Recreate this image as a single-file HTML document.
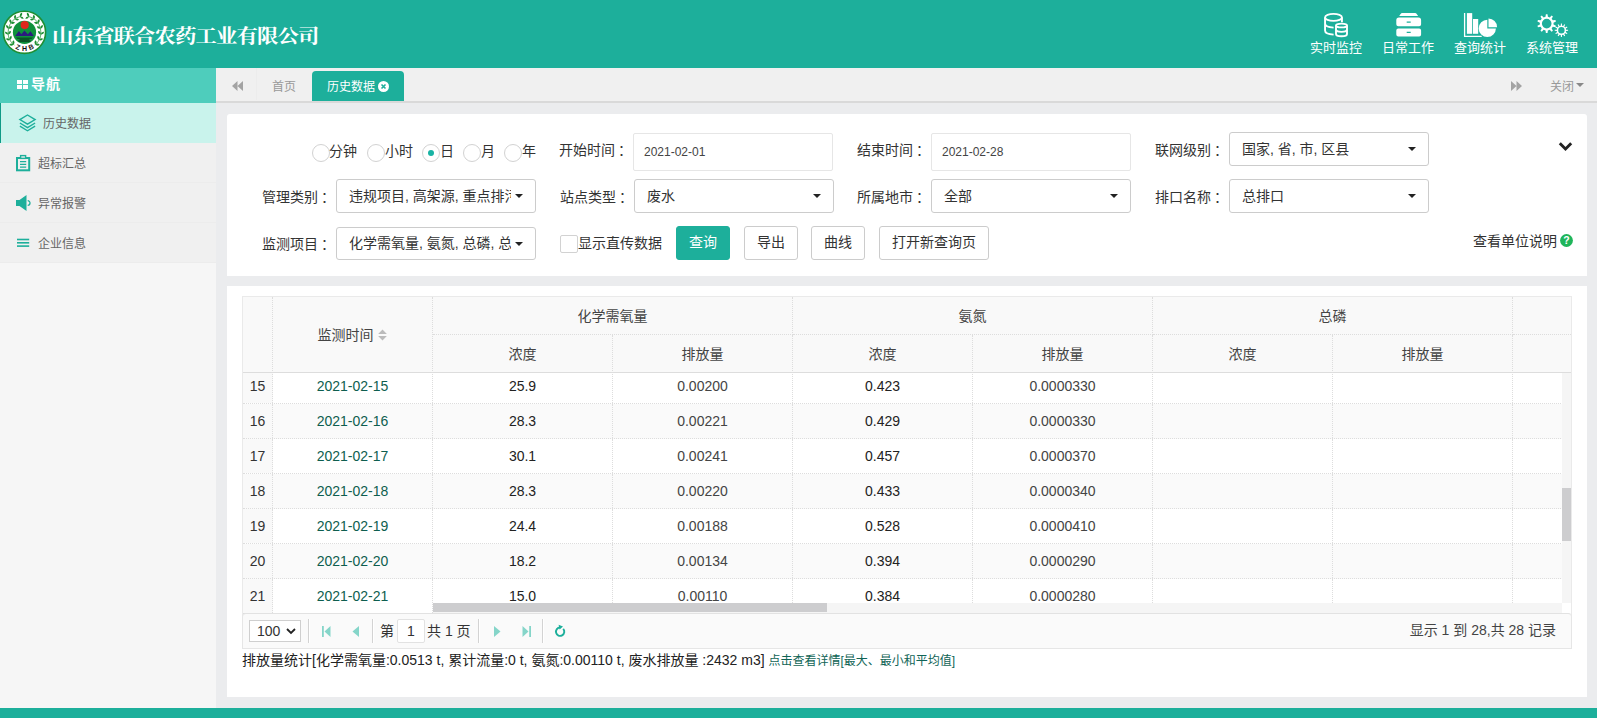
<!DOCTYPE html>
<html lang="zh-CN">
<head>
<meta charset="utf-8">
<title>山东省联合农药工业有限公司</title>
<style>
*{box-sizing:border-box;margin:0;padding:0}
html,body{width:1597px;height:718px;overflow:hidden;background:#ebecee}
body{position:relative;font-family:"Liberation Sans","Noto Sans CJK SC",sans-serif;font-size:13px;color:#333}
.abs{position:absolute}
/* header */
#hdr{position:absolute;left:0;top:0;width:1597px;height:68px;background:#1daf9b}
#title{position:absolute;left:52px;top:18px;height:36px;line-height:36px;font-family:"Liberation Serif","Noto Serif CJK SC",serif;font-weight:700;font-size:20px;color:#fff;letter-spacing:-0.85px;transform:scale(1.07,0.94);transform-origin:0 50%;white-space:nowrap}
.tm{position:absolute;top:0;width:72px;height:68px;color:#fff;text-align:center}
.tm svg{position:absolute;left:0;top:0}
.tm span{position:absolute;left:0;width:72px;top:39px;line-height:18px;font-size:13px;white-space:nowrap}
/* sidebar */
#side{position:absolute;left:0;top:68px;width:216px;height:640px;background:#f6f6f6}
#navh{position:absolute;left:0;top:0;width:216px;height:35px;background:#4ecdbc;color:#fff;font-weight:700;font-size:14px;line-height:34px}
#navh span{position:absolute;left:31px;top:-1px;letter-spacing:1px}
.mi{position:absolute;left:0;width:216px;height:40px;background:#f0f0f0;border-bottom:1px solid #ececec;color:#666;font-size:12px;line-height:40px}
.mi span{position:absolute;left:38px;top:1px;white-space:nowrap}
.mi.act{background:#c9f3ec;border-left:1px solid #0f9a86;border-bottom:none}
.mi.act span{left:42px}
/* tabs */
#tabs{position:absolute;left:216px;top:68px;width:1381px;height:35px;background:#f0f0f0;border-bottom:2px solid #d9d9d9}
#tabs .t{position:absolute;top:1px;height:32px;line-height:36px;font-size:12px;color:#999;white-space:nowrap}
#tabact{position:absolute;left:96px;top:3px;width:92px;height:30px;background:#1daf9b;border-radius:4px 4px 0 0;color:#fff;font-size:12px;line-height:30px}
/* cards */
.card{position:absolute;background:#fff;border-radius:0}
#fc{border-radius:3px 3px 0 0}
.lbl{position:absolute;font-size:14px;color:#333;line-height:20px;white-space:nowrap}
.sel{position:absolute;height:33px;width:200px;border:1px solid #ccc;border-radius:3px;background:#fff;font-size:14px;line-height:31px;color:#333;padding-left:12px;white-space:nowrap;overflow:hidden}
.sel i{position:absolute;right:12px;top:14px;width:0;height:0;border-left:4px solid transparent;border-right:4px solid transparent;border-top:4px solid #222}
.sel b{font-weight:400;display:block;width:162px;overflow:hidden}
.inp{position:absolute;height:38px;width:200px;border:1px solid #e6e6e6;border-radius:2px;background:#fff;font-size:12px;line-height:36px;color:#444;padding-left:10px}
.rad{position:absolute;width:18px;height:18px;border-radius:50%;border:1px solid #d2d2d2;background:#fff}
.btn{position:absolute;top:112px;height:34px;border:1px solid #ccc;border-radius:3px;background:#fff;font-size:14px;line-height:31px;text-align:center;color:#333;white-space:nowrap}
/* table */
#grid{position:absolute;left:15px;top:10px;width:1330px;height:353px;border:1px solid #eaeaea;overflow:hidden;background:#fff}
.hc{position:absolute;background:#f9f9f9;font-size:14px;color:#444;text-align:center;white-space:nowrap;border-right:1px dotted #ddd;border-bottom:1px dotted #ddd}
.row{position:absolute;left:0;width:1320px;height:35px;border-bottom:1px dotted #ddd;font-size:14px;line-height:34px}
.row.odd{background:#fafafa}
.row div{position:absolute;top:0;height:34px;text-align:center;border-right:1px dotted #ddd;color:#222}
.row .n{left:0;width:30px;background:#f9f9f9;color:#333}
.row .d{left:30px;width:160px;color:#0e5e4f}
.row .c1{left:190px;width:180px}
.row .c2{left:370px;width:180px;color:#444}
.row .c3{left:550px;width:180px}
.row .c4{left:730px;width:180px;color:#444}
.row .c5{left:910px;width:180px}
.row .c6{left:1090px;width:180px}
.row .c7{left:1270px;width:60px;border-right:none}
#pager{position:absolute;left:15px;top:327px;width:1330px;height:36px;background:#fafafa;border:1px solid #e6e6e6;border-top:1px solid #e2e2e2;border-radius:4px 4px 0 0;font-size:14px;color:#333}
.psep{position:absolute;top:5px;width:1px;height:24px;background:#d3d3d3;border-right:1px solid #fff;box-sizing:content-box}
#foot{position:absolute;left:0;top:708px;width:1597px;height:10px;background:#1daf9b}
</style>
</head>
<body>
<!-- HEADER -->
<div id="hdr">
  <svg class="abs" style="left:0;top:0" width="60" height="68" viewBox="0 0 60 68" id="logo">
<circle cx="24.5" cy="32.3" r="21.1" fill="#fff" stroke="#1f8f33" stroke-width="1.6"/>
<circle cx="24.5" cy="32.3" r="11.6" fill="#0f913c"/>
<circle cx="24.7" cy="25.1" r="4.1" fill="#e0261c"/>
<path d="M15.2 36 L18.9 31 L21.3 34.2 L24.5 30.4 L27.8 34.3 L30.5 31.2 L33.8 36 Z" fill="#2b1b7e"/>
<path d="M16 37.4 H33 L31.5 39 H29.5 V40.6 H31 L30 42 H19 L18 40.6 H19.5 V39 H17.5 Z" fill="#0a5526"/>
<path d="M13.53 44.49 Q11.24 42.54 9.24 44.78 Q11.52 46.73 13.53 44.49Z M13.53 44.49 Q15.54 42.26 13.36 40.19 Q11.35 42.42 13.53 44.49Z M9.98 39.91 Q8.51 37.29 5.85 38.69 Q7.32 41.32 9.98 39.91Z M9.98 39.91 Q12.64 38.53 11.32 35.83 Q8.65 37.22 9.98 39.91Z M8.23 34.39 Q7.77 31.42 4.79 31.82 Q5.25 34.79 8.23 34.39Z M8.23 34.39 Q11.22 34.02 10.91 31.03 Q7.93 31.40 8.23 34.39Z M8.52 28.61 Q9.12 25.67 6.19 25.00 Q5.59 27.94 8.52 28.61Z M8.52 28.61 Q11.45 29.30 12.20 26.39 Q9.27 25.70 8.52 28.61Z M10.80 23.29 Q12.38 20.73 9.87 19.09 Q8.28 21.64 10.80 23.29Z M10.80 23.29 Q13.30 24.95 15.02 22.48 Q12.52 20.82 10.80 23.29Z M14.78 19.09 Q17.16 17.24 15.37 14.83 Q13.00 16.67 14.78 19.09Z M14.78 19.09 Q16.56 21.51 19.02 19.80 Q17.25 17.37 14.78 19.09Z M19.98 16.54 Q22.85 15.63 22.01 12.74 Q19.14 13.65 19.98 16.54Z M19.98 16.54 Q20.80 19.43 23.71 18.67 Q22.89 15.78 19.98 16.54Z M35.47 44.49 Q37.65 42.42 35.64 40.19 Q33.46 42.26 35.47 44.49Z M35.47 44.49 Q37.48 46.73 39.76 44.78 Q37.76 42.54 35.47 44.49Z M39.02 39.91 Q40.35 37.22 37.68 35.83 Q36.36 38.53 39.02 39.91Z M39.02 39.91 Q41.68 41.32 43.15 38.69 Q40.49 37.29 39.02 39.91Z M40.77 34.39 Q41.07 31.40 38.09 31.03 Q37.78 34.02 40.77 34.39Z M40.77 34.39 Q43.75 34.79 44.21 31.82 Q41.23 31.42 40.77 34.39Z M40.48 28.61 Q39.73 25.70 36.80 26.39 Q37.55 29.30 40.48 28.61Z M40.48 28.61 Q43.41 27.94 42.81 25.00 Q39.88 25.67 40.48 28.61Z M38.20 23.29 Q36.48 20.82 33.98 22.48 Q35.70 24.95 38.20 23.29Z M38.20 23.29 Q40.72 21.64 39.13 19.09 Q36.62 20.73 38.20 23.29Z M34.22 19.09 Q31.75 17.37 29.98 19.80 Q32.44 21.51 34.22 19.09Z M34.22 19.09 Q36.00 16.67 33.63 14.83 Q31.84 17.24 34.22 19.09Z M29.02 16.54 Q26.11 15.78 25.29 18.67 Q28.20 19.43 29.02 16.54Z M29.02 16.54 Q29.86 13.65 26.99 12.74 Q26.15 15.63 29.02 16.54Z" fill="#1f8f33"/>
<path d="M14.40 45.22 A16.4 16.4 0 0 1 20.81 16.32" fill="none" stroke="#1f8f33" stroke-width="0.7"/>
<path d="M34.60 45.22 A16.4 16.4 0 0 0 28.19 16.32" fill="none" stroke="#1f8f33" stroke-width="0.7"/>
<text x="0" y="0" transform="translate(16.93 49.29) rotate(24)" text-anchor="middle" font-family="Liberation Sans,sans-serif" font-weight="700" font-size="7" fill="#111">Z</text>
<text x="0" y="0" transform="translate(24.50 50.90) rotate(0)" text-anchor="middle" font-family="Liberation Sans,sans-serif" font-weight="700" font-size="7" fill="#111">H</text>
<text x="0" y="0" transform="translate(32.07 49.29) rotate(-24)" text-anchor="middle" font-family="Liberation Sans,sans-serif" font-weight="700" font-size="7" fill="#111">B</text>
</svg>
  <div id="title">山东省联合农药工业有限公司</div>

  <div class="tm" style="left:1300px">
    <svg width="72" height="40" viewBox="0 0 72 40" fill="none" stroke="#fff" stroke-width="1.9">
      <ellipse cx="33.5" cy="17.4" rx="8.45" ry="3.5"/>
      <path d="M25.05 17.4 V30.6 C25.05 32.8 28.6 34.4 33.6 34.6 M41.95 17.4 V22.2 M25.05 23.6 C25.05 25.8 28.6 27.4 33.6 27.6"/>
      <ellipse cx="41.5" cy="25.5" rx="5.5" ry="1.9"/>
      <path d="M36 25.5 V34 C36 35.3 38.4 36.3 41.5 36.3 C44.6 36.3 47 35.3 47 34 V25.5 M36 29.6 C36 30.9 38.4 31.9 41.5 31.9 C44.6 31.9 47 30.9 47 29.6"/>
    </svg>
    <span>实时监控</span>
  </div>
  <div class="tm" style="left:1372px">
    <svg width="72" height="40" viewBox="0 0 72 40" fill="#fff">
      <path d="M30.3 13 H43 Q44.2 13 44.9 14.2 L46.1 16.1 H27.2 L28.4 14.2 Q29.1 13 30.3 13 Z"/>
      <path d="M27 17.6 H46.4 a2.7 2.7 0 0 1 2.7 2.7 V24.3 a2 2 0 0 1 -2 2 H26.3 A2 2 0 0 1 24.3 24.3 V20.3 a2.7 2.7 0 0 1 2.7 -2.7 Z M34.7 21.5 h4 v1.2 h-4 Z" fill-rule="evenodd"/>
      <path d="M26.3 28.4 H47.1 A2 2 0 0 1 49.1 30.4 V34.5 a2 2 0 0 1 -2 2 H26.3 A2 2 0 0 1 24.3 34.5 V30.4 A2 2 0 0 1 26.3 28.4 Z M34.7 31.7 h4 v1.2 h-4 Z" fill-rule="evenodd"/>
    </svg>
    <span>日常工作</span>
  </div>
  <div class="tm" style="left:1444px">
    <svg width="72" height="40" viewBox="0 0 72 40" fill="#fff">
      <path d="M20.6 12.9 V36.35 H37.7" fill="none" stroke="#fff" stroke-width="1.3"/>
      <rect x="22.9" y="13.1" width="5.3" height="20.7"/>
      <rect x="29" y="19" width="5.2" height="14.8"/>
      <path d="M43.3 19.8 A8.6 8.6 0 1 0 51.9 28.4 H43.3 Z"/>
      <path d="M44.5 18.6 A8.6 8.6 0 0 1 53.1 27.2 H44.5 Z"/>
    </svg>
    <span>查询统计</span>
  </div>
  <div class="tm" style="left:1516px">
    <svg width="72" height="40" viewBox="0 0 72 40" fill="#fff" fill-rule="evenodd" id="gears"><path d="M29.51 16.80 L29.87 14.14 L31.53 14.14 L31.89 16.80 L33.74 17.40 L35.59 15.45 L36.94 16.43 L35.66 18.80 L36.80 20.37 L39.44 19.88 L39.96 21.47 L37.53 22.63 L37.53 24.57 L39.96 25.73 L39.44 27.32 L36.80 26.83 L35.66 28.40 L36.94 30.77 L35.59 31.75 L33.74 29.80 L31.89 30.40 L31.53 33.06 L29.87 33.06 L29.51 30.40 L27.66 29.80 L25.81 31.75 L24.46 30.77 L25.74 28.40 L24.60 26.83 L21.96 27.32 L21.44 25.73 L23.87 24.57 L23.87 22.63 L21.44 21.47 L21.96 19.88 L24.60 20.37 L25.74 18.80 L24.46 16.43 L25.81 15.45 L27.66 17.40Z M25.90 23.60 a4.8 4.8 0 1 0 9.6 0 a4.8 4.8 0 1 0 -9.6 0Z"/><path d="M44.73 25.65 L44.91 23.62 L45.89 23.62 L46.07 25.65 L47.14 25.93 L48.32 24.27 L49.17 24.76 L48.31 26.61 L49.09 27.39 L50.94 26.53 L51.43 27.38 L49.77 28.56 L50.05 29.63 L52.08 29.81 L52.08 30.79 L50.05 30.97 L49.77 32.04 L51.43 33.22 L50.94 34.07 L49.09 33.21 L48.31 33.99 L49.17 35.84 L48.32 36.33 L47.14 34.67 L46.07 34.95 L45.89 36.98 L44.91 36.98 L44.73 34.95 L43.66 34.67 L42.48 36.33 L41.63 35.84 L42.49 33.99 L41.71 33.21 L39.86 34.07 L39.37 33.22 L41.03 32.04 L40.75 30.97 L38.72 30.79 L38.72 29.81 L40.75 29.63 L41.03 28.56 L39.37 27.38 L39.86 26.53 L41.71 27.39 L42.49 26.61 L41.63 24.76 L42.48 24.27 L43.66 25.93Z M42.20 30.30 a3.2 3.2 0 1 0 6.4 0 a3.2 3.2 0 1 0 -6.4 0Z"/></svg>
    <span>系统管理</span>
  </div>
</div>

<!-- SIDEBAR -->
<div id="side">
  <div id="navh">
    <svg class="abs" style="left:17px;top:12px" width="12" height="10" viewBox="0 0 12 10" fill="#fff"><rect x="0" y="0" width="5" height="4"/><rect x="6" y="0" width="5" height="4"/><rect x="0" y="5" width="5" height="4"/><rect x="6" y="5" width="5" height="4"/></svg>
    <span>导航</span>
  </div>
  <div class="mi act" style="top:35px">
    <svg class="abs" style="left:17px;top:10px" width="20" height="20" viewBox="0 0 20 20" fill="none" stroke="#1daf9b" stroke-width="1.4" stroke-linejoin="miter"><path d="M9.5 2 L17.1 6.6 L9.5 11.2 L1.9 6.6 Z"/><path d="M1.9 10 L9.5 14.6 L17.1 10"/><path d="M1.9 13.2 L9.5 17.8 L17.1 13.2"/></svg>
    <span>历史数据</span>
  </div>
  <div class="mi" style="top:75px">
    <svg class="abs" style="left:15px;top:11px" width="17" height="19" viewBox="0 0 17 19"><rect x="2" y="4" width="12.2" height="12.3" fill="none" stroke="#1daf9b" stroke-width="2"/><rect x="5.6" y="1.6" width="5" height="2.8" fill="#f0f0f0" stroke="#1daf9b" stroke-width="1.4"/><path d="M5 7.6 H11.2 M5 10.4 H11.2 M5 13.2 H11.2" stroke="#1daf9b" stroke-width="1.3"/></svg>
    <span>超标汇总</span>
  </div>
  <div class="mi" style="top:115px">
    <svg class="abs" style="left:15px;top:11px" width="16" height="18" viewBox="0 0 16 18" fill="#1daf9b"><path d="M1 6 H4.5 L11.5 1 V17 L4.5 12 H1 Z"/><path d="M12.7 6.7 A2.3 2.3 0 0 1 12.7 11.3" fill="none" stroke="#1daf9b" stroke-width="1.3"/></svg>
    <span>异常报警</span>
  </div>
  <div class="mi" style="top:155px">
    <svg class="abs" style="left:17px;top:15px" width="13" height="10" viewBox="0 0 13 10" fill="#1daf9b"><rect x="0" y="0.7" width="12.2" height="1.6"/><rect x="0" y="4" width="12.2" height="1.6"/><rect x="0" y="7.3" width="12.2" height="1.6"/></svg>
    <span>企业信息</span>
  </div>
</div>

<!-- TABS -->
<div id="tabs">
  <svg class="abs" style="left:16px;top:13px" width="11" height="10" viewBox="0 0 12 11" fill="#a3a3a3" preserveAspectRatio="none"><path d="M6 0 V11 L0 5.5 Z M12 0 V11 L6 5.5 Z"/></svg>
  <div class="abs" style="left:40px;top:0;width:1px;height:32px;background:#ececec"></div>
  <div class="t" style="left:56px">首页</div>
  <div id="tabact"><span class="abs" style="left:15px;top:1px;white-space:nowrap">历史数据</span>
    <svg class="abs" style="left:66px;top:10px" width="11" height="11" viewBox="0 0 11 11"><circle cx="5.5" cy="5.5" r="5.5" fill="#fff"/><path d="M3.5 3.5 L7.5 7.5 M7.5 3.5 L3.5 7.5" stroke="#1daf9b" stroke-width="1.6"/></svg>
  </div>
  <svg class="abs" style="left:1295px;top:13px" width="11" height="10" viewBox="0 0 12 11" fill="#a3a3a3" preserveAspectRatio="none"><path d="M0 0 V11 L6 5.5 Z M6 0 V11 L12 5.5 Z"/></svg>
  <div class="t" style="left:1334px">关闭</div>
  <i class="abs" style="left:1360px;top:15px;width:0;height:0;border-left:4px solid transparent;border-right:4px solid transparent;border-top:4px solid #888"></i>
</div>

<!-- FILTER CARD -->
<div class="card" id="fc" style="left:227px;top:114px;width:1360px;height:162px">
  <!-- row 1 : radios -->
  <div class="rad" style="left:85px;top:30px"></div><div class="lbl" style="left:102px;top:27px">分钟</div>
  <div class="rad" style="left:140px;top:30px"></div><div class="lbl" style="left:158px;top:27px">小时</div>
  <div class="rad" style="left:195px;top:30px"><i class="abs" style="left:5px;top:5px;width:6px;height:6px;border-radius:50%;background:#19b3a4"></i></div><div class="lbl" style="left:213px;top:27px">日</div>
  <div class="rad" style="left:236px;top:30px"></div><div class="lbl" style="left:254px;top:27px">月</div>
  <div class="rad" style="left:277px;top:30px"></div><div class="lbl" style="left:295px;top:27px">年</div>
  <div class="lbl" style="left:332px;top:26px">开始时间<span style="margin-left:3px">：</span></div>
  <div class="inp" style="left:406px;top:19px">2021-02-01</div>
  <div class="lbl" style="left:630px;top:26px">结束时间<span style="margin-left:3px">：</span></div>
  <div class="inp" style="left:704px;top:19px">2021-02-28</div>
  <div class="lbl" style="left:928px;top:26px">联网级别<span style="margin-left:3px">：</span></div>
  <div class="sel" style="left:1002px;top:18px;height:34px;line-height:32px"><b>国家, 省, 市, 区县</b><i></i></div>
  <svg class="abs" style="left:1331px;top:27px" width="15" height="12" viewBox="0 0 15 12"><path d="M1.8 2.3 L7.5 8 L13.2 2.3" fill="none" stroke="#222" stroke-width="2.9"/></svg>
  <!-- row 2 -->
  <div class="lbl" style="left:35px;top:73px">管理类别<span style="margin-left:3px">：</span></div>
  <div class="sel" style="left:109px;top:65px;height:34px;line-height:32px"><b>违规项目, 高架源, 重点排污单位</b><i></i></div>
  <div class="lbl" style="left:333px;top:73px">站点类型<span style="margin-left:3px">：</span></div>
  <div class="sel" style="left:407px;top:65px;height:34px;line-height:32px"><b>废水</b><i></i></div>
  <div class="lbl" style="left:630px;top:73px">所属地市<span style="margin-left:3px">：</span></div>
  <div class="sel" style="left:704px;top:65px;height:34px;line-height:32px"><b>全部</b><i></i></div>
  <div class="lbl" style="left:928px;top:73px">排口名称<span style="margin-left:3px">：</span></div>
  <div class="sel" style="left:1002px;top:65px;height:34px;line-height:32px"><b>总排口</b><i></i></div>
  <!-- row 3 -->
  <div class="lbl" style="left:35px;top:120px">监测项目<span style="margin-left:3px">：</span></div>
  <div class="sel" style="left:109px;top:113px"><b>化学需氧量, 氨氮, 总磷, 总氮</b><i></i></div>
  <div class="abs" style="left:333px;top:121px;width:18px;height:18px;border:1px solid #d2d2d2;border-radius:2px;background:#fff"></div>
  <div class="lbl" style="left:351px;top:119px">显示直传数据</div>
  <div class="btn" style="left:449px;width:54px;background:#1daf9b;border-color:#1daf9b;color:#fff">查询</div>
  <div class="btn" style="left:517px;width:54px">导出</div>
  <div class="btn" style="left:584px;width:54px">曲线</div>
  <div class="btn" style="left:652px;width:110px">打开新查询页</div>
  <div class="lbl" style="left:1246px;top:117px">查看单位说明</div>
  <svg class="abs" style="left:1332.5px;top:120px" width="13" height="13" viewBox="0 0 13 13"><circle cx="6.5" cy="6.5" r="6.4" fill="#1fb55a"/><text x="6.5" y="10.4" text-anchor="middle" font-family="Liberation Sans,sans-serif" font-weight="700" font-size="10.5" fill="#fff">?</text></svg>
</div>

<!-- TABLE CARD -->
<div class="card" id="tc" style="left:227px;top:286px;width:1360px;height:411px">
  <div id="grid">
    <div class="row" style="top:72px"><div class="n">15</div><div class="d">2021-02-15</div><div class="c1">25.9</div><div class="c2">0.00200</div><div class="c3">0.423</div><div class="c4">0.0000330</div><div class="c5"></div><div class="c6"></div><div class="c7"></div></div>
    <div class="row odd" style="top:107px"><div class="n">16</div><div class="d">2021-02-16</div><div class="c1">28.3</div><div class="c2">0.00221</div><div class="c3">0.429</div><div class="c4">0.0000330</div><div class="c5"></div><div class="c6"></div><div class="c7"></div></div>
    <div class="row" style="top:142px"><div class="n">17</div><div class="d">2021-02-17</div><div class="c1">30.1</div><div class="c2">0.00241</div><div class="c3">0.457</div><div class="c4">0.0000370</div><div class="c5"></div><div class="c6"></div><div class="c7"></div></div>
    <div class="row odd" style="top:177px"><div class="n">18</div><div class="d">2021-02-18</div><div class="c1">28.3</div><div class="c2">0.00220</div><div class="c3">0.433</div><div class="c4">0.0000340</div><div class="c5"></div><div class="c6"></div><div class="c7"></div></div>
    <div class="row" style="top:212px"><div class="n">19</div><div class="d">2021-02-19</div><div class="c1">24.4</div><div class="c2">0.00188</div><div class="c3">0.528</div><div class="c4">0.0000410</div><div class="c5"></div><div class="c6"></div><div class="c7"></div></div>
    <div class="row odd" style="top:247px"><div class="n">20</div><div class="d">2021-02-20</div><div class="c1">18.2</div><div class="c2">0.00134</div><div class="c3">0.394</div><div class="c4">0.0000290</div><div class="c5"></div><div class="c6"></div><div class="c7"></div></div>
    <div class="row" style="top:282px"><div class="n">21</div><div class="d">2021-02-21</div><div class="c1">15.0</div><div class="c2">0.00110</div><div class="c3">0.384</div><div class="c4">0.0000280</div><div class="c5"></div><div class="c6"></div><div class="c7"></div></div>
    <div class="hc" style="left:0;top:0;width:30px;height:76px;border-bottom:1px solid #ddd"></div>
    <div class="hc" style="left:30px;top:0;width:160px;height:76px;line-height:76px;border-bottom:1px solid #ddd"><span style="position:relative;left:-7px">监测时间</span>
      <svg class="abs" style="left:105px;top:32px" width="9" height="12" viewBox="0 0 8 11" fill="#bbb"><path d="M0 4.5 L4 0.5 L8 4.5 Z M0 6.5 L4 10.5 L8 6.5 Z"/></svg></div>
    <div class="hc" style="left:190px;top:0;width:360px;height:38px;line-height:38px">化学需氧量</div>
    <div class="hc" style="left:550px;top:0;width:360px;height:38px;line-height:38px">氨氮</div>
    <div class="hc" style="left:910px;top:0;width:360px;height:38px;line-height:38px">总磷</div>
    <div class="hc" style="left:1270px;top:0;width:60px;height:38px;border-right:none"></div>
    <div class="hc" style="left:190px;top:38px;width:180px;height:38px;line-height:38px;border-bottom:1px solid #ddd">浓度</div>
    <div class="hc" style="left:370px;top:38px;width:180px;height:38px;line-height:38px;border-bottom:1px solid #ddd">排放量</div>
    <div class="hc" style="left:550px;top:38px;width:180px;height:38px;line-height:38px;border-bottom:1px solid #ddd">浓度</div>
    <div class="hc" style="left:730px;top:38px;width:180px;height:38px;line-height:38px;border-bottom:1px solid #ddd">排放量</div>
    <div class="hc" style="left:910px;top:38px;width:180px;height:38px;line-height:38px;border-bottom:1px solid #ddd">浓度</div>
    <div class="hc" style="left:1090px;top:38px;width:180px;height:38px;line-height:38px;border-bottom:1px solid #ddd">排放量</div>
    <div class="hc" style="left:1270px;top:38px;width:60px;height:38px;border-right:none;border-bottom:1px solid #ddd"></div>
    <!-- scrollbars -->
    <div class="abs" style="left:1319px;top:76px;width:10px;height:230px;background:#f5f5f5"></div>
    <div class="abs" style="left:1319px;top:191px;width:9px;height:53px;background:#cdcdcf"></div>
    <div class="abs" style="left:190px;top:306px;width:1129px;height:11px;background:#f5f5f5"></div>
    <div class="abs" style="left:190px;top:306px;width:394px;height:9px;background:#cdcdcf"></div>
  </div>
  <div id="pager">
    <div class="abs" style="left:6px;top:6px;width:52px;height:22px;border:1px solid #cfcfcf;border-radius:0;background:#fff;line-height:20px;padding-left:7px;font-size:14px;color:#333">100
      <svg class="abs" style="left:36px;top:7px" width="10" height="7" viewBox="0 0 10 7"><path d="M1 1 L5 5 L9 1" fill="none" stroke="#222" stroke-width="1.8"/></svg></div>
    <div class="psep" style="left:65px"></div>
    <svg class="abs" style="left:79px;top:12px" width="9" height="11" viewBox="0 0 9 11" fill="#85d5c9"><rect x="0" y="0" width="1.8" height="11"/><path d="M8.5 0 V11 L2.5 5.5 Z"/></svg>
    <svg class="abs" style="left:109px;top:12px" width="8" height="11" viewBox="0 0 8 11" fill="#85d5c9"><path d="M7 0 V11 L0.5 5.5 Z"/></svg>
    <div class="psep" style="left:129px"></div>
    <div class="abs" style="left:137px;top:7px;line-height:20px">第</div>
    <div class="abs" style="left:154px;top:5px;width:28px;height:24px;border:1px solid #e2e2e2;border-radius:2px;background:#fff;line-height:22px;text-align:center;font-size:14px">1</div>
    <div class="abs" style="left:184px;top:7px;line-height:20px;white-space:nowrap">共 1 页</div>
    <div class="psep" style="left:235px"></div>
    <svg class="abs" style="left:250px;top:12px" width="8" height="11" viewBox="0 0 8 11" fill="#85d5c9"><path d="M1 0 V11 L7.5 5.5 Z"/></svg>
    <svg class="abs" style="left:279px;top:12px" width="9" height="11" viewBox="0 0 9 11" fill="#85d5c9"><rect x="7.2" y="0" width="1.8" height="11"/><path d="M0.5 0 V11 L6.5 5.5 Z"/></svg>
    <div class="psep" style="left:299px"></div>
    <svg class="abs" style="left:311px;top:10px" width="13" height="14" viewBox="0 0 13 14"><path d="M6.1 3.55 A4.15 4.15 0 1 0 9.2 4.9" fill="none" stroke="#1daf9b" stroke-width="1.9"/><path d="M4.6 0.7 L9 2.5 L5.6 5.4 Z" fill="#1daf9b"/></svg>
    <div class="abs" style="right:15px;top:6px;line-height:20px;white-space:nowrap;color:#444">显示 1 到 28,共 28 记录</div>
  </div>
  <div class="abs" style="left:15px;top:364px;line-height:20px;font-size:14px;color:#222;white-space:nowrap">排放量统计[化学需氧量:0.0513 t, 累计流量:0 t, 氨氮:0.00110 t, 废水排放量 :2432 m3] <span style="font-size:12px;color:#0f6456">点击查看详情[最大、最小和平均值]</span></div>
</div>

<div id="foot"></div>
</body>
</html>
